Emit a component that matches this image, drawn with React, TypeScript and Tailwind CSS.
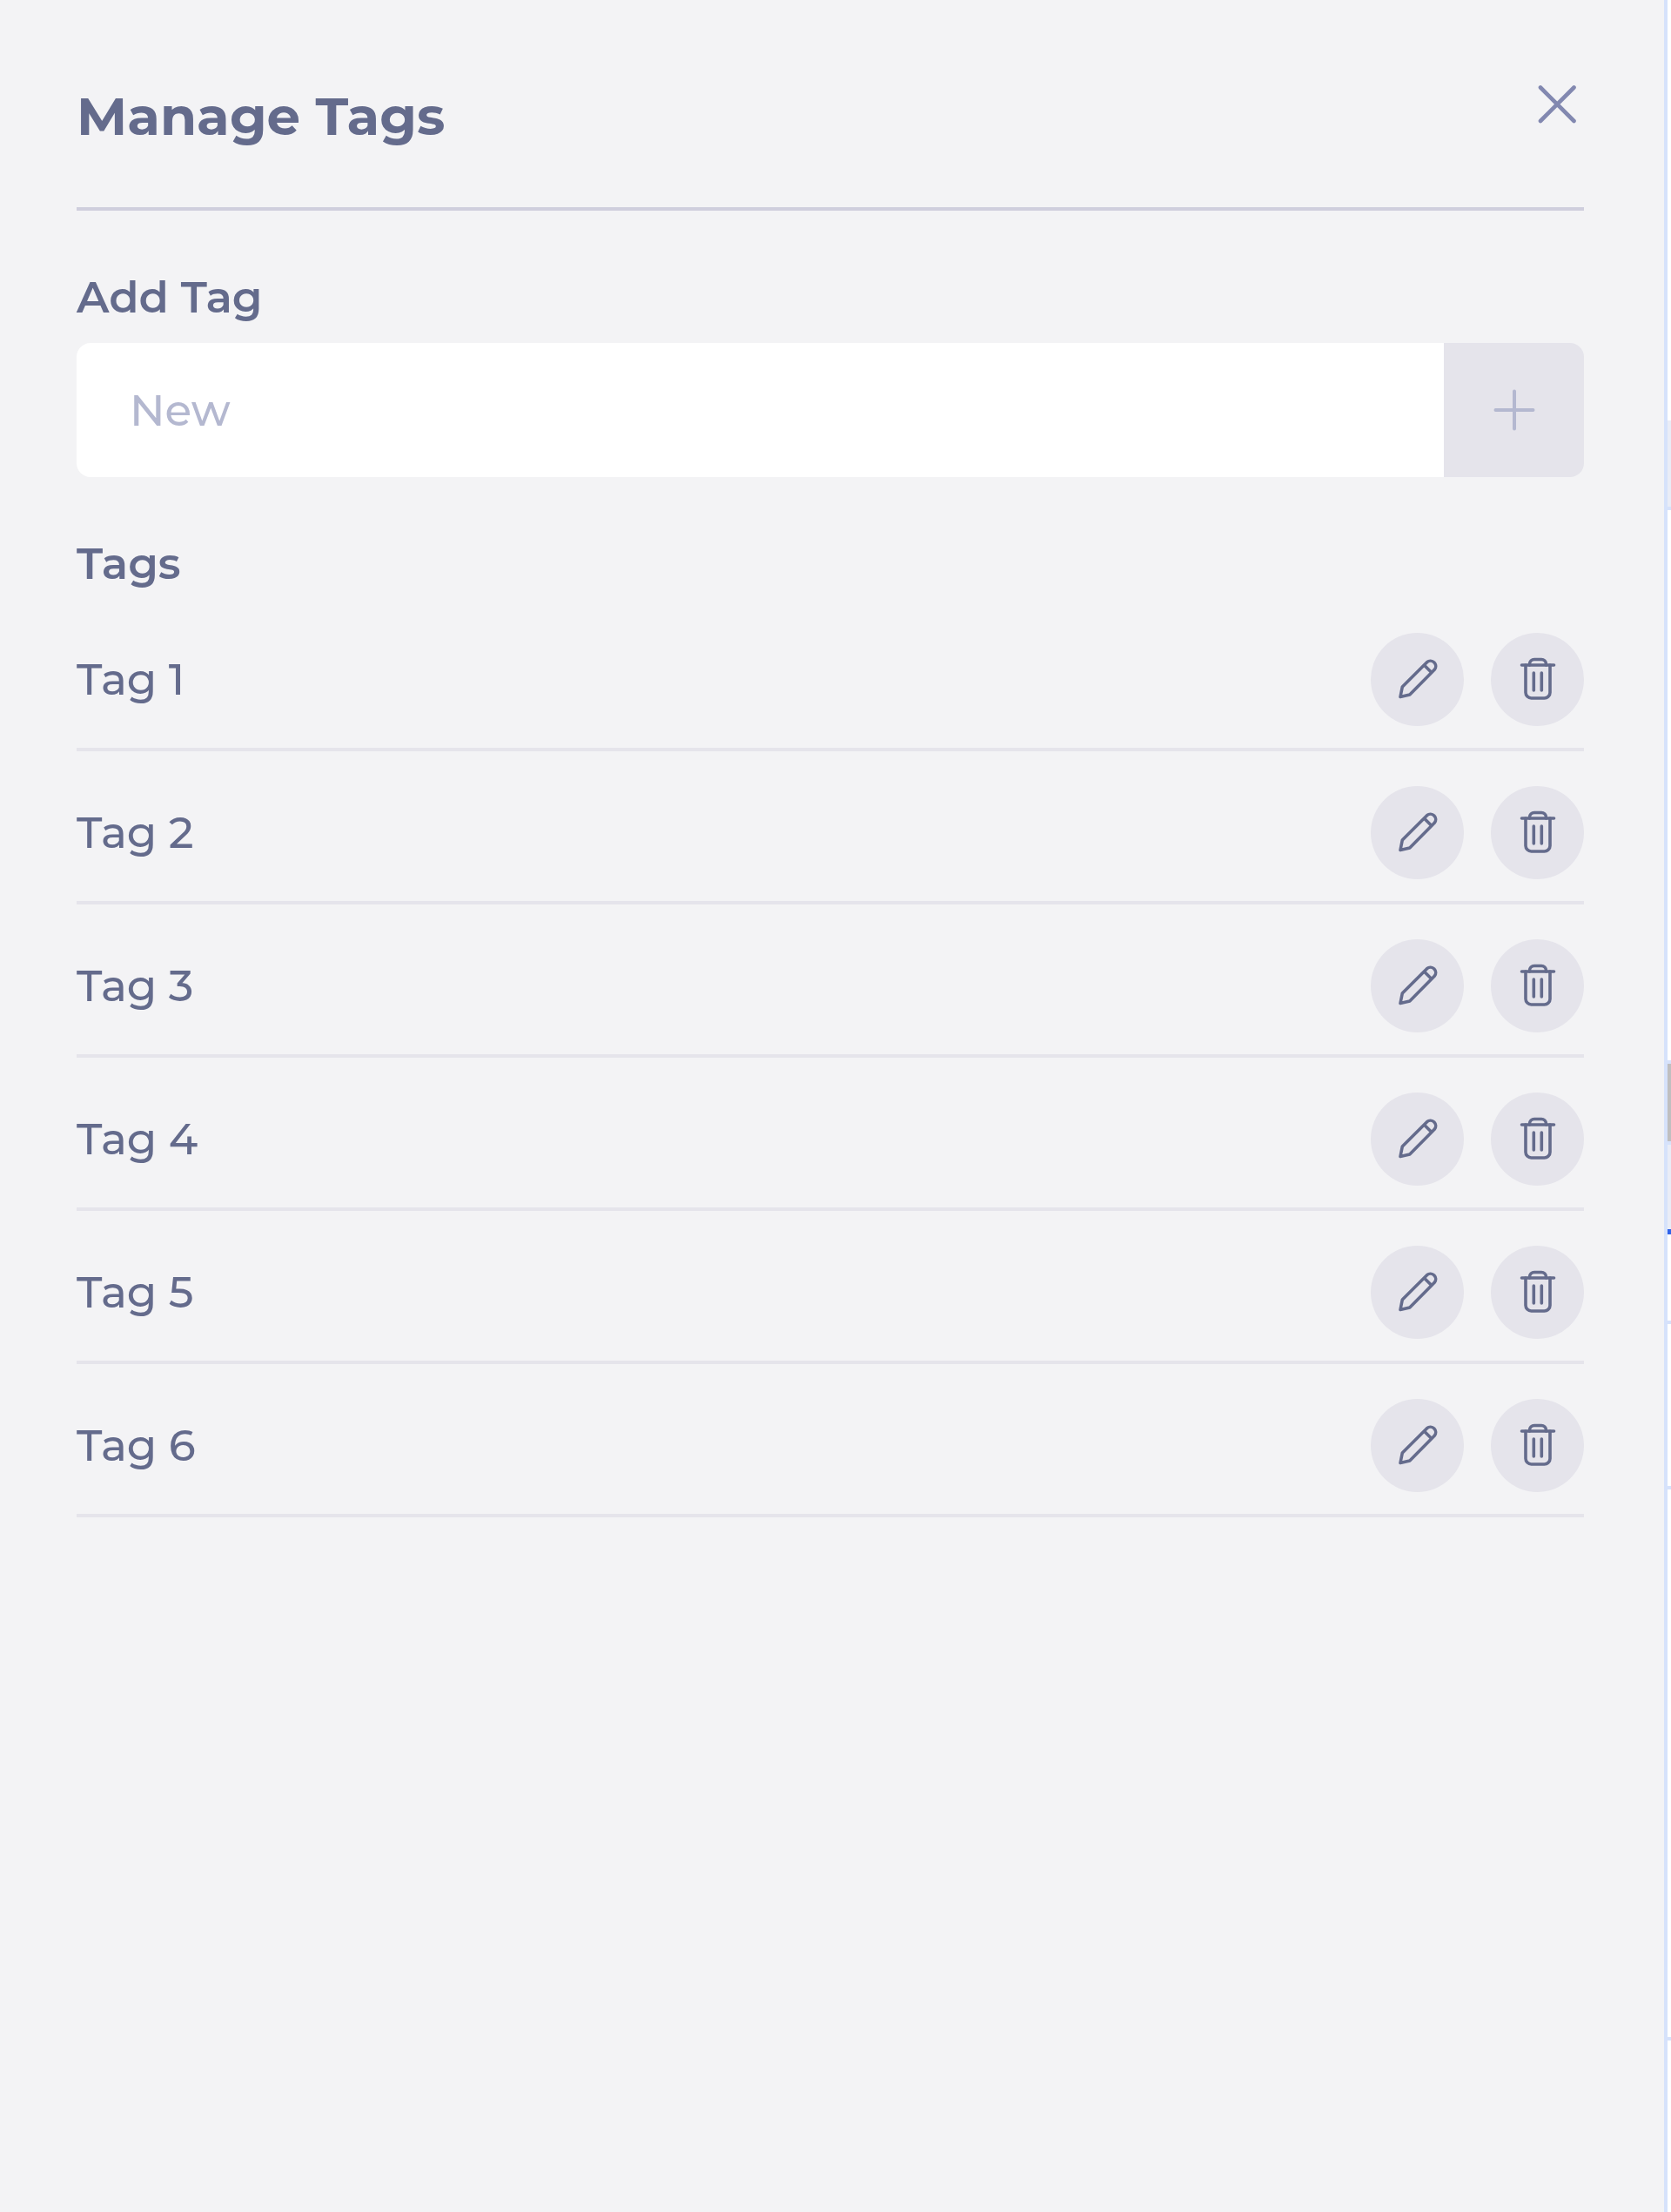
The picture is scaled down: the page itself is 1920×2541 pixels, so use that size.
import { useState } from "react"

interface Tag {
  id: number
  name: string
}

const initialTags: Tag[] = [
  { id: 1, name: "Tag 1" },
  { id: 2, name: "Tag 2" },
  { id: 3, name: "Tag 3" },
  { id: 4, name: "Tag 4" },
  { id: 5, name: "Tag 5" },
  { id: 6, name: "Tag 6" }
]

function CloseIcon() {
  return (
    <svg viewBox="0 0 64 64" className="w-16 h-16" fill="none" stroke="currentColor" strokeWidth="4.6" strokeLinecap="round" aria-hidden="true">
      <path d="M14 12.5l38.5 38.5M52.5 12.5L14 51" />
    </svg>
  )
}

function PlusIcon() {
  return (
    <svg viewBox="0 0 48 48" className="w-12 h-12" fill="none" stroke="currentColor" strokeWidth="4" strokeLinecap="round" aria-hidden="true">
      <path d="M24 2.5v43M2.5 24h43" />
    </svg>
  )
}

function PencilIcon() {
  return (
    <svg viewBox="-2 -2 52 52" className="w-[52px] h-[52px]" fill="none" stroke="currentColor" strokeWidth="3.6" strokeLinejoin="round" aria-hidden="true">
      <path d="M4 43.5L6.3 32L34.6 3.7A6.1 6.1 0 0 1 43.2 12.3L14.8 40.9Z" />
      <path d="M31.3 7L39.9 15.6" />
    </svg>
  )
}

function TrashIcon() {
  return (
    <svg viewBox="-2 -2 52 52" className="w-[52px] h-[52px]" fill="none" stroke="currentColor" strokeWidth="3.6" strokeLinecap="round" aria-hidden="true">
      <path d="M5.5 7h37" />
      <path d="M14.5 7v-1a5.5 5.5 0 0 1 5.5 -5.5h8a5.5 5.5 0 0 1 5.5 5.5v1" />
      <path d="M10 7v31.5a6.5 6.5 0 0 0 6.5 6.5h15a6.5 6.5 0 0 0 6.5 -6.5v-31.5" />
      <path d="M19.3 16v20M28.3 16v20" />
    </svg>
  )
}

function TagRow({ tag, onDelete }: { tag: Tag; onDelete: () => void }) {
  const buttonClass = "flex items-center justify-center w-[107px] h-[107px] rounded-full bg-[#e5e4eb]"

  return (
    <li className="flex items-center justify-between pt-10 pb-[25px] border-b-4 border-[#e5e4eb]">
      <span className="text-[50px] leading-[60px] font-medium">{tag.name}</span>
      <div className="flex gap-[31px]">
        <button type="button" aria-label={`Edit ${tag.name}`} className={buttonClass}>
          <PencilIcon />
        </button>
        <button type="button" aria-label={`Delete ${tag.name}`} className={buttonClass} onClick={onDelete}>
          <TrashIcon />
        </button>
      </div>
    </li>
  )
}

// Sliver of the calendar that stays visible next to the panel
function CalendarEdge() {
  return (
    <div className="flex flex-col w-2 flex-shrink-0 border-l-4 border-[#d6e2fb] bg-white" aria-hidden="true">
      <div className="h-[483px]" />
      <div className="h-[103px] bg-[#e9edf7] border-b-4 border-[#d6e2fb]" />
      <div className="h-[636px] border-b-4 border-[#d6e2fb]" />
      <div className="h-[93px] bg-[#bfbfc0] border-b-4 border-[#d6e2fb]" />
      <div className="h-[97px] bg-[#e9edf7]" />
      <div className="h-[6px] bg-[#2f63ea]" />
      <div className="h-[103px] border-b-4 border-[#d6e2fb]" />
      <div className="h-[190px] border-b-4 border-[#d6e2fb]" />
      <div className="h-[633px] border-b-4 border-[#d6e2fb]" />
    </div>
  )
}

export default function App() {
  const [tags, setTags] = useState<Tag[]>(initialTags)
  const [name, setName] = useState("")

  const addTag = () => {
    if (!name.trim()) return
    setTags([...tags, { id: Date.now(), name: name.trim() }])
    setName("")
  }

  return (
    <div className="flex min-h-screen bg-[#f3f3f5] text-[#646b8c] font-['Montserrat','Inter',sans-serif]">
      <main className="flex-1 min-w-0 pt-[88px] pl-[88px] pr-[92px]">
        {/* Header Section */}
        <header className="flex items-start justify-between pb-[73px] border-b-4 border-[#cfcedd]">
          <h1 className="mt-[13px] text-[61px] leading-[64px] font-bold">Manage Tags</h1>
          <button type="button" aria-label="Close" className="text-[#8288b0]">
            <CloseIcon />
          </button>
        </header>

        {/* Add Tag Section */}
        <form
          className="mt-[70px]"
          onSubmit={(e) => {
            e.preventDefault()
            addTag()
          }}
        >
          <label htmlFor="new-tag" className="block text-[50px] leading-[60px] font-semibold">Add Tag</label>
          <div className="flex mt-[22px] h-[154px] rounded-2xl overflow-hidden">
            <input
              id="new-tag"
              type="text"
              placeholder="New"
              value={name}
              onChange={(e) => setName(e.target.value)}
              className="flex-1 min-w-0 px-[61px] bg-white text-[50px] font-medium outline-none placeholder:text-[#b4b8d0]"
            />
            <button type="submit" aria-label="Add" className="flex items-center justify-center w-[161px] bg-[#e5e4eb] text-[#b4b8d0]">
              <PlusIcon />
            </button>
          </div>
        </form>

        {/* Tags Section */}
        <section className="mt-[70px]">
          <h2 className="text-[50px] leading-[60px] font-semibold">Tags</h2>
          <ul className="mt-[9px]">
            {tags.map((tag) => (
              <TagRow key={tag.id} tag={tag} onDelete={() => setTags(tags.filter((t) => t.id !== tag.id))} />
            ))}
          </ul>
        </section>
      </main>
      <CalendarEdge />
    </div>
  )
}
